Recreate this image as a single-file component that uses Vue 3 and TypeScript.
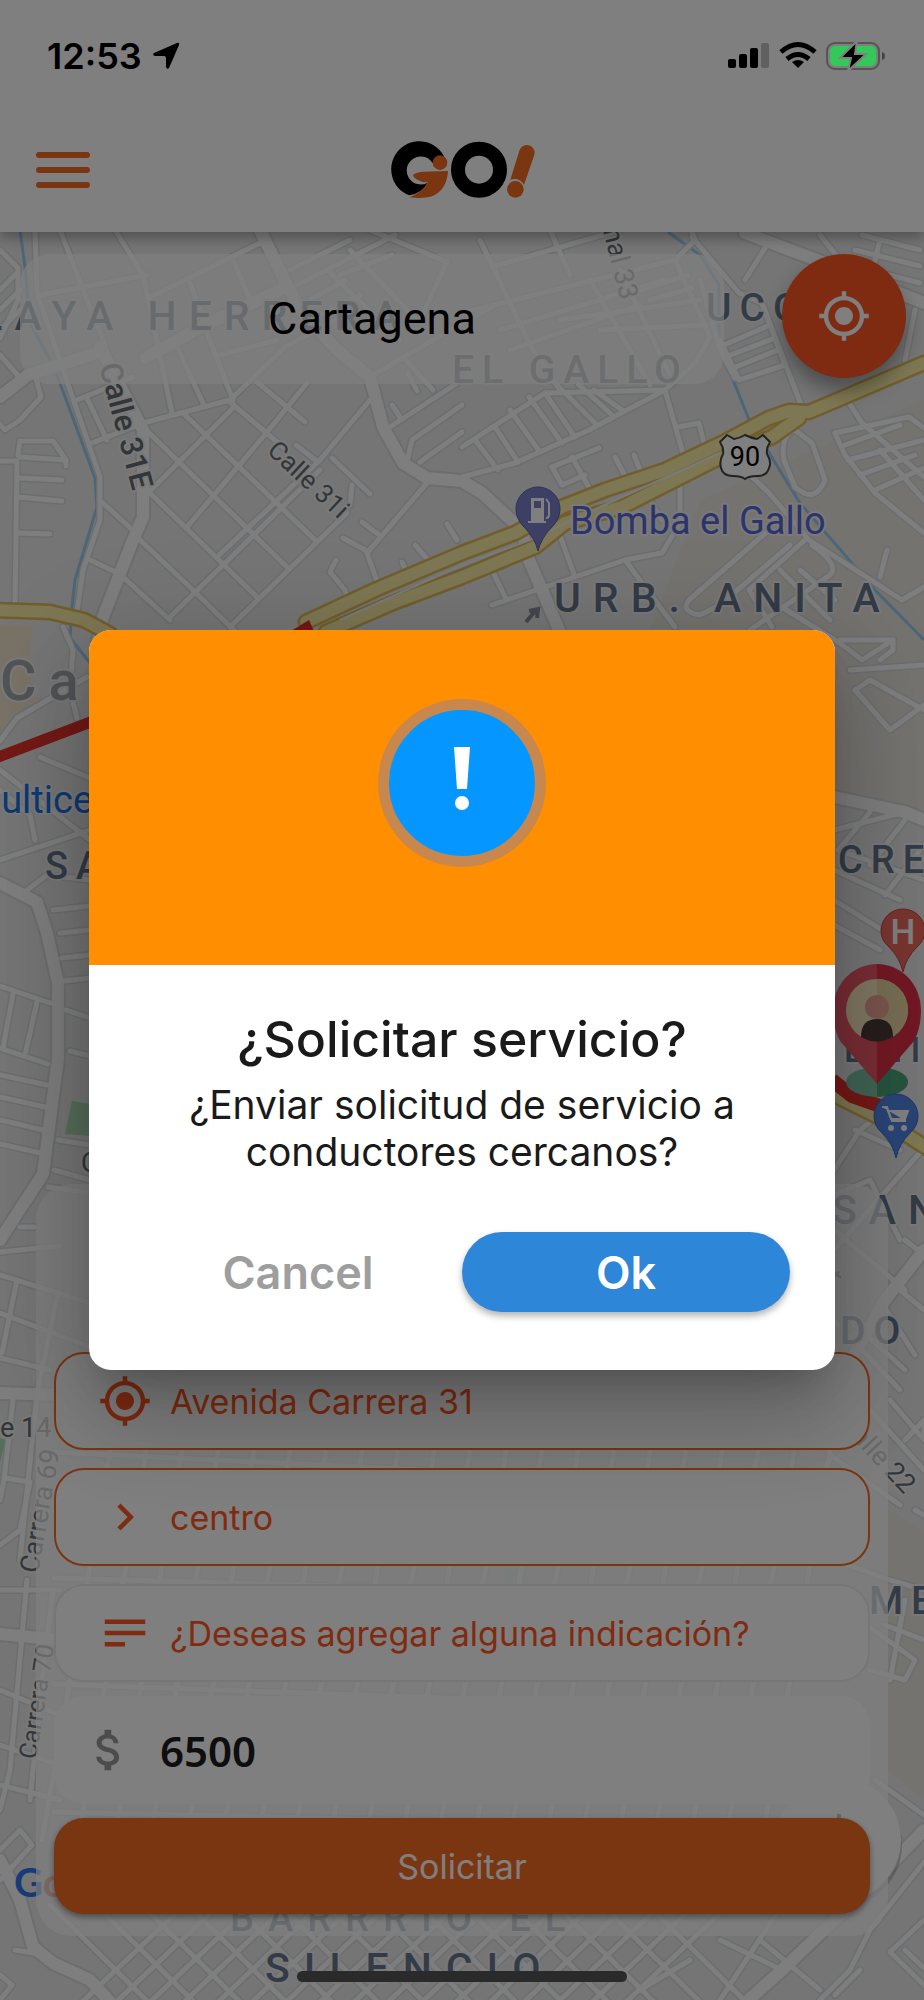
<script setup lang="ts">
import { ref } from 'vue'

interface MapLabel {
  text: string
  x: number
  y: number
  size: number
  kind: string
  rotate?: number
}

const origin = ref('Avenida Carrera 31')
const destination = ref('centro')
const note = ref('')
const fare = ref('6500')
const dialogOpen = ref(true)

const wideRoads: string[] = [
  'M0 397L28 375L100 352', 'M145 358L205 325L280 290',
  'M260 230L283 277L300 310L337 350L370 377L383 427L403 463L427 478L462 481L482 493L522 530L529 560L539 583L559 630',
  'M100 347L143 430L143 517L133 540L103 617L98 640', 'M745 233L830 265L924 303',
  'M0 883L37 902L47 933L58 983L58 1059L43 1174L0 1240', 'M0 1393L60 1395', 'M0 1634L60 1640',
  'M0 1860L20 1900L33 1947L53 1963L90 1980L112 2004', 'M924 1830L866 1890L782 1970L744 2004',
  'M834 797L905 812L924 820', 'M924 1250L885 1300L834 1390',
]

const streets: string[] = [
  'M35 230L37 293L53 340L70 390L100 477L100 520L83 570L77 612', 'M60 230L87 300L105 345',
  'M115 230L143 275L172 413', 'M40 295L147 275', 'M150 297L260 243', 'M190 283L207 327', 'M233 260L253 307',
  'M177 347L203 403', 'M207 333L233 400', 'M220 355L277 340', 'M77 400L133 377', 'M92 443L143 423L230 400L285 347L345 315',
  'M148 493L233 408', 'M187 527L263 437L307 383', 'M217 557L320 460L370 400', 'M170 617L320 470', 'M230 627L347 513',
  'M143 427L287 567', 'M183 413L315 540', 'M230 402L283 447', 'M150 493L257 597', 'M140 540L193 590L240 636', 'M123 577L170 620',
  'M257 382L305 422', 'M87 398L107 440', 'M103 503L138 535', 'M90 560L122 575', 'M0 461L17 461L15 607', 'M17 497L62 501', 'M17 533L50 534',
  'M18 455L20 441L53 441L66 460L66 466', 'M20 457L66 460', 'M20 478L62 480', 'M0 290L17 273', 'M0 310L20 290', 'M0 330L22 308', 'M0 250L18 268L18 300L0 338',
  'M0 355L22 380', 'M35 375L41 397L20 420L5 430L0 424', 'M427 483L367 553L380 590', 'M370 377L462 323L492 307', 'M403 357L433 390', 'M390 427L462 380',
  'M408 373L417 391', 'M392 405L400 417', 'M407 462L412 440L462 405', 'M420 462L462 432', 'M332 458L370 494', 'M352 485L350 505', 'M362 522L378 534', 'M343 538L367 551',
  'M336 560L330 572L345 590L349 603', 'M415 545L430 562', 'M402 562L408 575', 'M447 524L457 540', 'M296 445L318 462',
  'M290 270L350 240', 'M297 285L395 235', 'M327 270L400 340', 'M350 250L417 320', 'M370 230L447 262L420 320', 'M340 275L392 255', 'M310 300L345 280', 'M320 315L360 295',
  'M462 313L675 260L695 240L692 232', 'M675 260L710 337L695 363L665 390L545 393L462 447', 'M492 267L620 230', 'M550 230L570 275', 'M500 330L665 280',
  'M510 350L640 305', 'M590 280L650 385', 'M620 270L670 375', 'M480 240L530 345L560 390', 'M560 320L700 300', 'M600 330L706 325', 'M640 290L688 275', 'M650 300L692 288',
  'M692 237L739 293L762 303L802 407', 'M720 340L739 380L785 365L762 303', 'M724 345L770 325', 'M728 356L775 338', 'M733 368L778 350', 'M745 280L770 240',
  'M700 280L720 350L735 378', 'M665 390L684 457', 'M462 477L515 463L589 430L665 390', 'M495 427L518 462', 'M529 397L562 443', 'M545 393L575 437', 'M559 387L595 423', 'M475 440L498 470',
  'M510 410L540 452', 'M578 384L612 415', 'M594 390L622 410', 'M552 467L599 448', 'M552 467L562 485L585 475', 'M572 457L592 493', 'M615 457L627 480', 'M634 455L642 475',
  'M679 427L699 423L705 447', 'M680 483L680 523L662 553L625 560L642 583L675 627', 'M625 560L492 605', 'M559 533L575 577', 'M492 570L505 597', 'M649 499L662 520',
  'M849 403L862 423L924 477', 'M835 433L909 417L924 428', 'M835 433L845 455L875 493L924 533', 'M845 445L900 425', 'M848 460L924 440', 'M860 475L915 455', 'M875 490L924 468', 'M880 450L924 500',
  'M795 430Q780 435 784 460L795 487Q815 505 825 480L812 443Z', 'M752 477L769 493L809 540L902 600L924 587', 'M805 540L749 590L772 627', 'M769 530L689 600Q680 612 700 615L720 605L790 545',
  'M887 550L880 577', 'M800 570L835 600', 'M780 570L830 620', 'M812 545Q840 565 830 575L750 630', 'M862 235L920 250', 'M855 250L920 266', 'M850 265L920 283', 'M880 240L870 280', 'M915 310L905 360', 'M820 235L840 260',
  'M840 640L893 640L893 650L880 660', 'M770 600L835 640Q850 650 862 660L893 640', 'M855 690L890 730L924 705', 'M855 690L870 680L924 710', 'M850 670L924 665',
  'M834 830L905 812', 'M838 850L924 880', 'M834 870L900 900', 'M834 900L890 935', 'M834 925L880 950', 'M870 812L838 850', 'M905 820L870 865', 'M924 845L885 895',
  'M834 1170L860 1130L875 1118', 'M924 1148L834 1250', 'M855 1130L900 1150', 'M834 1195L870 1180L900 1240', 'M834 1230L905 1290', 'M905 1240L924 1255', 'M880 1300L915 1355', 'M900 1290L924 1310',
  'M834 1320L900 1390', 'M850 1320L905 1370', 'M890 1400L924 1440L924 1420L905 1440', 'M870 1410L924 1470', 'M830 1455L900 1505', 'M915 1510L924 1515', 'M924 1590L890 1580L834 1560', 'M905 1600L890 1680', 'M885 1625L924 1640', 'M860 1620L915 1660L905 1680L870 1670',
  'M63 627L73 650L70 690L77 718', 'M0 741L17 718L87 677', 'M40 757L90 778', 'M0 770L90 840', 'M0 860L90 830', 'M0 790L30 815L35 840', 'M27 890L47 875L90 880',
  'M53 910L90 906', 'M60 933L90 930', 'M62 958L90 955', 'M63 981L90 978', 'M66 1010L90 1018', 'M70 1051L90 1056', 'M58 1140L90 1145', 'M54 1170L90 1180',
  'M0 986L50 1003', 'M0 1048L48 1064', 'M0 1075L47 1085', 'M0 1097L45 1107', 'M0 1120L43 1130', 'M0 1144L40 1153', 'M13 994L3 1048', 'M37 1002L25 1055',
  'M0 1275L90 1303', 'M0 1313L90 1347', 'M0 1358L50 1370', 'M17 1280L2 1353', 'M58 1293L37 1393L20 1560', 'M13 1400L4 1480L0 1500', 'M20 1227L34 1227', 'M48 1187L90 1193', 'M0 1252L60 1246', 'M5 1478L30 1482L20 1530L0 1545',
  'M27 1580L10 1770L0 1810', 'M53 1590L40 1700L30 1800', 'M0 1690L60 1715', 'M0 1745L60 1765', 'M0 1785L60 1800', 'M0 1590L60 1590', 'M0 1850L20 1830L32 1845L0 1880', 'M15 1950L45 1955', 'M0 1975L12 1985L0 2000',
  'M924 1862L870 1930L850 1970L820 2000', 'M924 1985L890 1952L924 1920', 'M905 1950L924 1968', 'M860 1970L835 1995', 'M782 1970L720 1940', 'M720 2000L782 1905', 'M690 1960L640 1990', 'M760 1940L820 1990', 'M875 1780L924 1815', 'M870 1810L900 1840',
]

// Regular blocks of streets, laid out as families of parallel lines
const southGrid: string[] = [
  ...Array.from({ length: 17 }, (_, i) => `M${80 + i * 34} 2004L${190 + i * 34} 1900`),
  ...Array.from({ length: 14 }, (_, i) => `M${50 + i * 46} 1905L${150 + i * 46} 2004`),
]
const hiddenGrid: string[] = [
  ...Array.from({ length: 21 }, (_, i) => `M${112 + i * 36} 1440L${42 + i * 36} 1840`),
  'M54 1452L830 1490', 'M54 1578L830 1600', 'M54 1684L830 1712', 'M54 1812L830 1830',
]

const highways: string[] = [
  'M-6 610L50 612L84 620L110 634',
  'M306 622L377 589L462 553L515 533L562 507L605 490L665 470L722 443L769 418L789 411L809 412L924 363',
  'M326 632L393 603L462 577L535 547L565 523L622 507L715 460L772 437L799 418',
  'M834 1095L880 1118L930 1150',
]

const labels: MapLabel[] = [
  { text: 'LAYA HERRERA', x: -20, y: 330, size: 41, kind: 'district' },
  { text: 'UCO', x: 706, y: 321, size: 39, kind: 'district close' },
  { text: 'EL GALLO', x: 452, y: 383, size: 39, kind: 'quarter' },
  { text: 'URB. ANITA', x: 554, y: 612, size: 41, kind: 'district' },
  { text: 'SA', x: 45, y: 879, size: 38, kind: 'district close' },
  { text: 'CRE', x: 838, y: 873, size: 38, kind: 'district close' },
  { text: 'EMI', x: 844, y: 1062, size: 35, kind: 'district close' },
  { text: 'SAN', x: 832, y: 1224, size: 41, kind: 'district' },
  { text: 'DO', x: 840, y: 1344, size: 39, kind: 'district close' },
  { text: 'ME', x: 869, y: 1614, size: 39, kind: 'district close' },
  { text: 'BARRRIO EL', x: 230, y: 1931, size: 38, kind: 'district loose' },
  { text: 'SILENCIO', x: 265, y: 1982, size: 41, kind: 'district loose' },
  { text: 'Ca', x: 0, y: 700, size: 56, kind: 'city' },
  { text: 'Bomba el Gallo', x: 570, y: 534, size: 38, kind: 'fuel' },
  { text: 'Multice', x: -32, y: 813, size: 38, kind: 'mall' },
  { text: 'Calle 31E', x: 99, y: 366, size: 31, kind: 'street strong', rotate: 75 },
  { text: 'Calle 31i', x: 266, y: 452, size: 26, kind: 'street', rotate: 43 },
  { text: 'nal 33', x: 603, y: 230, size: 27, kind: 'street', rotate: 76 },
  { text: 'e 14', x: 0, y: 1437, size: 27, kind: 'street' },
  { text: 'Carrera 69', x: 38, y: 1574, size: 27, kind: 'street', rotate: -80 },
  { text: 'Carrera 70', x: 36, y: 1760, size: 25, kind: 'street', rotate: -81 },
  { text: 'Calle 22', x: 838, y: 1424, size: 27, kind: 'street', rotate: 47 },
  { text: '4', x: 834, y: 1286, size: 27, kind: 'street', rotate: -50 },
  { text: 'C', x: 81, y: 1172, size: 27, kind: 'street' },
]

function turn(label: MapLabel): string | undefined {
  return label.rotate ? `rotate(${label.rotate} ${label.x} ${label.y})` : undefined
}

function closeDialog(): void {
  dialogOpen.value = false
}
</script>

<template>
  <div class="screen">
    <svg class="map" viewBox="0 0 924 2000" preserveAspectRatio="xMidYMid slice" aria-hidden="true">
      <rect width="924" height="2000" fill="#eaeaea" />
      <path d="M700 500L760 474L924 400V815L834 795V629H650Z" fill="#ebe7e1" />
      <path d="M888 1510L924 1530V1800L888 1770Z" fill="#ebe7e1" />
      <path d="M0 625H32Q26 700 40 700L0 745Z" fill="#f0e7cc" />
      <path d="M72 1101L92 1104V1136L65 1134Z" fill="#aedcb6" />
      <path d="M0 1438L6 1440L0 1462Z" fill="#aedcb6" />
      <path d="M505 1568h22v16h-25z" fill="#d5e8da" />
      <path d="M20 230L25 267L30 323L50 360L60 383L95 478L97 507L75 580L72 607L70 638L90 663" class="water" />
      <path d="M668 232L700 255L719 285L719 345L750 422L800 503L875 590L924 640" class="water" />
      <g class="casing thin"><path v-for="d in hiddenGrid" :key="d" :d="d" /></g>
      <g class="casing thin"><path v-for="d in streets" :key="d" :d="d" /><path v-for="d in southGrid" :key="d" :d="d" /></g>
      <g class="casing wide"><path v-for="d in wideRoads" :key="d" :d="d" /></g>
      <g class="fill thin"><path v-for="d in streets" :key="d" :d="d" /><path v-for="d in southGrid" :key="d" :d="d" /><path v-for="d in hiddenGrid" :key="d" :d="d" /></g>
      <g class="fill wide"><path v-for="d in wideRoads" :key="d" :d="d" /></g>
      <g class="highway-edge"><path v-for="d in highways" :key="d" :d="d" /></g>
      <g class="highway"><path v-for="d in highways" :key="d" :d="d" /></g>
      <path d="M340 620L462 565L530 540L600 507L720 453" class="median" />
      <path d="M-4 758L96 720" class="traffic" />
      <path d="M291 631L309 620L314 631Z" fill="#e8332c" />
      <path d="M832 1080L852 1096L880 1106" class="traffic heavy" />
      <path d="M526 622L536 610M529 611l9-2l-1 9" stroke="#8c8ca0" stroke-width="4" fill="none" />

      <text
        v-for="label in labels"
        :key="label.text + label.y"
        :x="label.x"
        :y="label.y"
        :font-size="label.size"
        :transform="turn(label)"
        :class="['label', label.kind]"
      >{{ label.text }}</text>

      <path d="M727 435l7 4q6-1 11-4q6 3 12 4l6-4l7 7q-4 6-3 12q5 8 2 14q-2 8-12 8q-8 0-12 3q-4-3-12-3q-10 0-12-8q-2-7 2-14q1-6-3-12z" fill="#fff" stroke="#444" stroke-width="2" />
      <text x="745" y="466" font-size="27" text-anchor="middle" class="shield">90</text>

      <path d="M538 551Q535 538 524 527Q516 519 516 509A22 22 0 0 1 560 509Q560 519 552 527Q541 538 538 551Z" fill="#7a80c8" stroke="#5a62b4" />
      <path d="M531 498h13v23h2v2h-18v-2h3zM534 501v7h7v-7z" fill="#fff" fill-rule="evenodd" />
      <path d="M546 499l3 4v12q0 3-3 3" fill="none" stroke="#fff" stroke-width="2" />

      <path d="M903 972Q900 958 889 947Q881 940 881 931A22 22 0 0 1 925 931Q925 940 917 947Q906 958 903 972Z" fill="#f06a60" stroke="#c9443a" />
      <text x="903" y="944" font-size="35" text-anchor="middle" class="pin-letter">H</text>

      <ellipse cx="877" cy="1082" rx="31" ry="15" fill="#7ec8a8" />
      <path d="M877 1067a31 15 0 0 1 0 30z" fill="#4fa67e" />
      <path d="M877 1084L840 1041Q833 1028 833 1010A44 46 0 0 1 877 964Z" fill="#f25a6a" />
      <path d="M877 1084L914 1041Q921 1028 921 1010A44 46 0 0 0 877 964Z" fill="#e23349" />
      <circle cx="877" cy="1010" r="31" fill="#ffeec4" />
      <path d="M877 979a31 31 0 0 1 0 62z" fill="#eddaa6" />
      <circle cx="877" cy="1007" r="12" fill="#f2a89a" />
      <path d="M861 1037Q861 1019 877 1019Q893 1019 893 1037Q877 1046 861 1037Z" fill="#4d3c3a" />

      <path d="M896 1158Q893 1144 882 1133Q874 1126 874 1116A22 22 0 0 1 918 1116Q918 1126 910 1133Q899 1144 896 1158Z" fill="#5288ea" stroke="#3a6fd0" />
      <path d="M882 1107h5l5 14h14M888 1111h20l-3 8h-14z" fill="#fff" stroke="#fff" stroke-width="2" />
      <circle cx="891" cy="1128" r="3" fill="#fff" /><circle cx="904" cy="1128" r="3" fill="#fff" />

      <text x="14" y="1897" font-size="40" class="brand"><tspan fill="#2f74f0">G</tspan><tspan fill="#ea4335">o</tspan></text>
      <circle cx="840" cy="1845" r="62" fill="#9a9a9a" opacity=".5" />
      <circle cx="839" cy="1840" r="62" fill="#fff" />
      <path d="M837 1814h4v8h-4z" fill="#555" />
    </svg>

    <div class="app">
      <header class="app-bar">
        <button class="icon-button" type="button" aria-label="Menú">
          <svg width="54" height="36" viewBox="0 0 54 36"><path d="M3 3h48M3 18h48M3 33h48" stroke="#f46c22" stroke-width="6" stroke-linecap="round" /></svg>
        </button>
        <svg class="logo" width="170" height="80" viewBox="0 0 510 240" role="img" aria-label="GO!">
          <path d="M204 85A84 84 0 1 0 96 196Q135 190 152 158A42 42 0 1 1 166 98Z" />
          <path d="M108 134Q118 126 135 125L213 123Q210 175 172 196Q145 208 98 202Q138 186 153 157Q135 158 118 148Q108 142 108 134Z" fill="#f46c22" />
          <circle cx="189" cy="98" r="22" fill="#f46c22" />
          <circle cx="306" cy="119" r="63" fill="none" stroke="#000" stroke-width="42" />
          <path d="M427 62A23 23 0 0 1 472 74L441 164Q428 142 400 149Z" fill="#f46c22" />
          <circle cx="415" cy="178" r="25" fill="#f46c22" />
        </svg>
      </header>

      <div class="city-row">
        <div class="place">Cartagena</div>
        <button class="locate" type="button" aria-label="Mi ubicación">
          <svg width="54" height="54" viewBox="0 0 24 24" fill="currentColor"><path d="M12 8c-2.210 0-4 1.790-4 4s1.790 4 4 4 4-1.790 4-4-1.790-4-4-4zm8.940 3c-.46-4.170-3.770-7.480-7.940-7.940V1h-2v2.060C6.830 3.520 3.520 6.830 3.060 11H1v2h2.060c.46 4.170 3.770 7.480 7.940 7.940V23h2v-2.060c4.170-.46 7.480-3.770 7.940-7.940H23v-2h-2.060zM12 19c-3.870 0-7-3.130-7-7s3.130-7 7-7 7 3.130 7 7-3.130 7-7 7z" /></svg>
        </button>
      </div>

      <form class="panel" @submit.prevent="dialogOpen = true">
        <label class="field">
          <svg width="54" height="54" viewBox="0 0 24 24" fill="currentColor"><path d="M12 8c-2.210 0-4 1.790-4 4s1.790 4 4 4 4-1.790 4-4-1.790-4-4-4zm8.940 3c-.46-4.170-3.770-7.480-7.940-7.940V1h-2v2.060C6.830 3.520 3.520 6.830 3.060 11H1v2h2.060c.46 4.170 3.770 7.480 7.940 7.940V23h2v-2.060c4.170-.46 7.480-3.770 7.940-7.940H23v-2h-2.060zM12 19c-3.870 0-7-3.130-7-7s3.130-7 7-7 7 3.130 7 7-3.130 7-7 7z" /></svg>
          <input v-model="origin" type="text" aria-label="Origen" />
        </label>
        <label class="field">
          <svg width="54" height="54" viewBox="0 0 24 24" fill="currentColor"><path d="M10 6L8.590 7.410 13.170 12l-4.580 4.590L10 18l6-6z" /></svg>
          <input v-model="destination" type="text" aria-label="Destino" />
        </label>
        <label class="field plain">
          <svg width="54" height="54" viewBox="0 0 24 24" fill="currentColor"><path d="M3 18h9v-2H3v2zM3 6v2h18V6H3zm0 7h18v-2H3v2z" /></svg>
          <input v-model="note" type="text" placeholder="¿Deseas agregar alguna indicación?" aria-label="Indicación" />
        </label>
        <label class="field fare">
          <svg width="54" height="54" viewBox="0 0 24 24" fill="currentColor"><path d="M11.800 10.900c-2.270-.59-3-1.200-3-2.150 0-1.090 1.010-1.850 2.700-1.850 1.780 0 2.440.85 2.500 2.100h2.210c-.07-1.720-1.120-3.300-3.210-3.810V3h-3v2.160c-1.940.42-3.500 1.680-3.500 3.610 0 2.310 1.910 3.460 4.700 4.130 2.500.6 3 1.480 3 2.410 0 .69-.49 1.790-2.700 1.790-2.060 0-2.870-.92-2.980-2.100h-2.200c.12 2.190 1.760 3.420 3.680 3.830V21h3v-2.150c1.950-.37 3.500-1.500 3.500-3.550 0-2.840-2.430-3.810-4.700-4.400z" /></svg>
          <input v-model="fare" type="text" inputmode="numeric" aria-label="Tarifa" />
        </label>
        <button class="submit" type="submit">Solicitar</button>
      </form>
    </div>

    <div v-if="dialogOpen" class="scrim">
      <section class="dialog" role="dialog" aria-modal="true" aria-labelledby="dialog-title">
        <div class="dialog-head">
          <div class="badge">
            <svg width="24" height="72" viewBox="0 0 24 72" fill="#fff"><path d="M4 0h16l-3 42H7z" /><circle cx="12" cy="56" r="7" /></svg>
          </div>
        </div>
        <div class="dialog-body">
          <h2 id="dialog-title">¿Solicitar servicio?</h2>
          <p>¿Enviar solicitud de servicio a conductores cercanos?</p>
          <div class="actions">
            <button class="cancel" type="button" @click="closeDialog">Cancel</button>
            <button class="ok" type="button" @click="closeDialog">Ok</button>
          </div>
        </div>
      </section>
    </div>

    <div class="status">
      <div class="clock">
        <span>12:53</span>
        <svg width="28" height="28" viewBox="0 0 28 28"><path d="M25 1Q28 0 27 3L17 26Q15 28 14 25V16Q14 14 12 14H3Q0 13 2 11Z" /></svg>
      </div>
      <svg width="158" height="30" viewBox="0 0 158 30" aria-hidden="true">
        <rect x="0" y="18" width="8" height="9" rx="2" /><rect x="11" y="13" width="8" height="14" rx="2" />
        <rect x="22" y="7" width="8" height="20" rx="2" /><rect x="33" y="2" width="8" height="25" rx="2" fill="#606060" />
        <g fill="none" stroke="#000" stroke-width="5"><path d="M53 11Q70 -4 87 11" /><path d="M59 18Q70 9 81 18" /></g>
        <path d="M64 21Q70 17 76 21L70 27Z" />
        <rect x="99" y="2" width="52" height="26" rx="8" fill="none" stroke="#555" stroke-width="2" />
        <rect x="102" y="5" width="46" height="20" rx="5" fill="#34c759" />
        <path d="M154 11Q157 12 157 15Q157 18 154 19Z" fill="#444" />
        <path d="M129 0L112 17H123L120 30L138 13H127Z" stroke="#808080" stroke-width="2" />
      </svg>
    </div>
    <div class="home-indicator"></div>
  </div>
</template>

<style>
body {
  margin: 0;
  background: #757575;
}
</style>

<style scoped>
.screen {
  position: relative;
  min-height: 100vh;
  overflow: hidden;
  display: flex;
  font-family: Inter, "Liberation Sans", sans-serif;
  color: #000;
}
button, input {
  font: inherit;
  color: inherit;
  border: 0;
  padding: 0;
  margin: 0;
  background: none;
}
.map {
  position: absolute;
  inset: 0;
  width: 100%;
  height: 100%;
}
.casing, .fill, .highway, .highway-edge {
  fill: none;
  stroke-linecap: round;
  stroke-linejoin: round;
}
.casing { stroke: #d6dbde; }
.casing.thin { stroke-width: 8px; }
.casing.wide { stroke-width: 16px; }
.fill { stroke: #fcfcfc; }
.fill.thin { stroke-width: 5px; }
.fill.wide { stroke-width: 12px; }
.highway-edge { stroke: #e2bc58; stroke-width: 17px; }
.highway { stroke: #fbeea6; stroke-width: 12px; }
.median { fill: none; stroke: #f4f4f4; stroke-width: 2px; }
.water { fill: none; stroke: #98cdf0; stroke-width: 3px; }
.traffic { fill: none; stroke: #e8332c; stroke-width: 11px; }
.traffic.heavy { stroke-width: 14px; }
.label {
  font-family: Roboto, "Liberation Sans", sans-serif;
  paint-order: stroke;
  stroke: #f2f2f2;
  stroke-width: 4px;
  stroke-linejoin: round;
}
.district { fill: #67768c; font-weight: 500; letter-spacing: 12px; }
.close { letter-spacing: 8px; }
.loose { letter-spacing: 14px; }
.quarter { fill: #80868e; font-weight: 500; letter-spacing: 8px; }
.city { fill: #a2a6ac; font-weight: 500; letter-spacing: 12px; }
.fuel { fill: #5a66d6; }
.mall { fill: #1a73e8; }
.street { fill: #666c70; }
.strong { font-weight: 500; }
.shield { font-family: Roboto, sans-serif; }
.pin-letter { font-family: Roboto, sans-serif; font-weight: 500; fill: #fff; }
.brand { font-family: Lato, sans-serif; font-weight: 700; }

.app {
  position: relative;
  flex: 1;
  display: flex;
  flex-direction: column;
}
.app-bar {
  display: grid;
  grid-template-columns: 1fr auto 1fr;
  align-items: center;
  padding: 130px 36px 22px;
  background: #fff;
  box-shadow: 0 6px 12px rgba(0, 0, 0, .3);
}
.icon-button { justify-self: start; display: flex; }
.city-row {
  display: flex;
  align-items: flex-start;
  gap: 58px;
  padding: 22px 18px 0 20px;
}
.place {
  flex: 1;
  padding: 38px 0;
  border-radius: 30px;
  background: rgba(255, 255, 255, .7);
  font-family: Roboto, "Liberation Sans", sans-serif;
  font-size: 45px;
  line-height: 54px;
  text-align: center;
}
.locate {
  width: 124px;
  height: 124px;
  border-radius: 50%;
  background: #ff5722;
  color: #fff;
  display: grid;
  place-items: center;
  box-shadow: 0 12px 20px rgba(0, 0, 0, .35);
}
.panel {
  margin: auto 36px 64px;
  padding: 168px 18px 22px;
  border-radius: 36px;
  background: rgba(255, 255, 255, .7);
  display: flex;
  flex-direction: column;
  gap: 18px;
}
.field {
  display: flex;
  align-items: center;
  gap: 18px;
  height: 94px;
  padding: 0 42px;
  border: 2px solid #f46c22;
  border-radius: 30px;
  background: #fff;
  color: #ff5722;
  font-size: 34px;
}
.field svg { flex: none; }
.field input { flex: 1; min-width: 0; outline: 0; }
.field input::placeholder { color: #ff5722; opacity: 1; }
.field.plain { border-color: #ececec; }
.field.fare {
  height: 108px;
  margin: -4px 0;
  padding: 0 28px;
  gap: 24px;
  border: 0;
  color: #999;
}
.fare input {
  color: #1c1c1c;
  font-family: "Noto Sans", sans-serif;
  font-size: 42px;
  font-weight: 600;
}
.submit {
  height: 96px;
  border-radius: 30px;
  background: #f46c22;
  color: #fff;
  font-size: 34px;
  box-shadow: 0 3px 6px rgba(0, 0, 0, .4);
}

.scrim {
  position: absolute;
  inset: 0;
  display: grid;
  place-items: center;
  padding: 0 89px;
  background: rgba(0, 0, 0, .5);
}
.dialog {
  width: 100%;
  border-radius: 22px;
  overflow: hidden;
  background: #fff;
  box-shadow: 0 24px 34px -16px rgba(0, 0, 0, .2), 0 54px 84px 6px rgba(0, 0, 0, .14), 0 20px 102px 18px rgba(0, 0, 0, .12);
}
.dialog-head {
  display: grid;
  place-items: center;
  padding: 69px 0 98px;
  background: #ff8f00;
}
.badge {
  display: grid;
  place-items: center;
  width: 146px;
  height: 146px;
  border: 11px solid #c8874d;
  border-radius: 50%;
  background: #0596ff;
}
.dialog-body {
  padding: 44px 45px 58px;
  text-align: center;
  color: #1a1a1a;
}
.dialog-body h2 {
  margin: 0 0 12px;
  font-size: 50px;
  line-height: 60px;
  font-weight: 500;
}
.dialog-body p {
  max-width: 600px;
  margin: 0 auto 57px;
  font-size: 39px;
  line-height: 47px;
}
.actions {
  display: grid;
  grid-template-columns: 1fr 1fr;
}
.actions button {
  height: 80px;
  font-size: 45px;
  font-weight: 600;
}
.cancel { color: #9e9e9e; }
.actions .ok {
  border-radius: 40px;
  background: #2e86d8;
  color: #fff;
  box-shadow: 0 4px 7px rgba(0, 0, 0, .3);
}

.status {
  position: absolute;
  inset: 0 0 auto;
  display: flex;
  justify-content: space-between;
  align-items: center;
  padding: 36px 38px 0 47px;
}
.clock {
  display: flex;
  align-items: center;
  gap: 10px;
  font-size: 36px;
  line-height: 40px;
  font-weight: 600;
}
.home-indicator {
  position: absolute;
  bottom: 18px;
  left: 0;
  right: 0;
  margin: 0 auto;
  width: 330px;
  height: 11px;
  border-radius: 6px;
  background: #2a2a2a;
}
</style>
